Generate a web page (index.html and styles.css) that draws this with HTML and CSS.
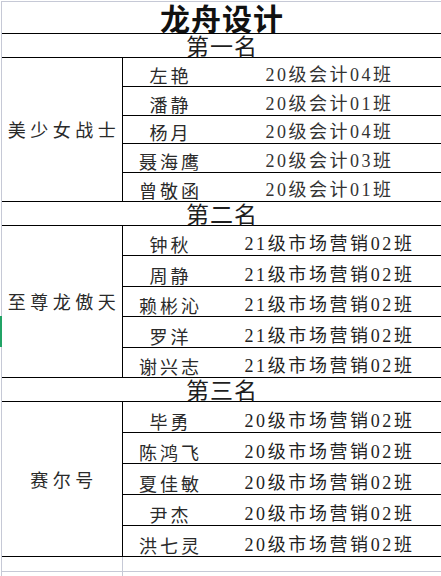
FILE: index.html
```html
<!DOCTYPE html>
<html lang="zh-CN">
<head>
<meta charset="utf-8">
<title>龙舟设计</title>
<link rel="stylesheet" href="styles.css">
</head>
<body>
<div class="page">
  <div class="sheet">
    <div class="title">龙舟设计</div>
    <div class="rank">第一名</div>
    <div class="group g1">
      <div class="team">美少女战士</div>
      <div class="members">
        <div class="row"><span class="name">左艳</span><span class="cls">20级会计04班</span></div>
        <div class="row"><span class="name">潘静</span><span class="cls">20级会计01班</span></div>
        <div class="row"><span class="name">杨月</span><span class="cls">20级会计04班</span></div>
        <div class="row"><span class="name">聂海鹰</span><span class="cls">20级会计03班</span></div>
        <div class="row"><span class="name">曾敬函</span><span class="cls">20级会计01班</span></div>
      </div>
    </div>
    <div class="rank">第二名</div>
    <div class="group g2">
      <div class="team">至尊龙傲天</div>
      <div class="members">
        <div class="row"><span class="name">钟秋</span><span class="cls">21级市场营销02班</span></div>
        <div class="row"><span class="name">周静</span><span class="cls">21级市场营销02班</span></div>
        <div class="row"><span class="name">赖彬沁</span><span class="cls">21级市场营销02班</span></div>
        <div class="row"><span class="name">罗洋</span><span class="cls">21级市场营销02班</span></div>
        <div class="row"><span class="name">谢兴志</span><span class="cls">21级市场营销02班</span></div>
      </div>
    </div>
    <div class="rank">第三名</div>
    <div class="group g3">
      <div class="team">赛尔号</div>
      <div class="members">
        <div class="row"><span class="name">毕勇</span><span class="cls">20级市场营销02班</span></div>
        <div class="row"><span class="name">陈鸿飞</span><span class="cls">20级市场营销02班</span></div>
        <div class="row"><span class="name">夏佳敏</span><span class="cls">20级市场营销02班</span></div>
        <div class="row"><span class="name">尹杰</span><span class="cls">20级市场营销02班</span></div>
        <div class="row"><span class="name">洪七灵</span><span class="cls">20级市场营销02班</span></div>
      </div>
    </div>
    <div class="tail">
      <div class="tcell first"></div><div class="tcell"></div>
      <div class="tcell first last"></div><div class="tcell last"></div>
    </div>
  </div>
  <div class="marker"></div>
</div>
</body>
</html>
```

FILE: styles.css
```css
html, body {
  margin: 0;
  padding: 0;
  overflow: hidden;
  background: #ffffff;
}

.page {
  position: relative;
  width: 441px;
  height: 576px;
  overflow: hidden;
}

.sheet {
  width: 440px;
  margin-left: 1px;
  margin-top: 1px;
  border-left: 1px solid #c6c9d6;
  border-top: 1px solid #c6c9d6;
  color: #1e1e1e;
  font-family: "Noto Sans CJK SC", sans-serif;
}

.title {
  height: 31px;
  line-height: 31px;
  font-size: 30px;
  font-weight: bold;
  text-align: center;
  letter-spacing: 1px;
  color: #111;
  border-bottom: 1px solid #000;
}

.rank {
  height: 23px;
  line-height: 23px;
  font-size: 23px;
  text-align: center;
  letter-spacing: 1px;
  border-bottom: 1px solid #000;
}

.group {
  display: grid;
  grid-template-columns: 121px 1fr;
  border-bottom: 1px solid #000;
}

.team {
  border-right: 1px solid #000;
  display: flex;
  align-items: center;
  justify-content: center;
  font-size: 18px;
  letter-spacing: 4.5px;
  padding-left: 4px;
  color: #2a2a2a;
}

.members {
  display: flex;
  flex-direction: column;
}

.row {
  display: grid;
  grid-template-columns: 92px 1fr;
  align-items: end;
  font-size: 18px;
  line-height: 22px;
}

.row + .row {
  border-top: 1px solid #000;
}

.g1 .row { height: 27.8px; }
.g2 .row { height: 29.4px; }
.g3 .row { height: 30px; }

.name {
  text-align: center;
  letter-spacing: 3px;
  padding-left: 3px;
  color: #2a2a2a;
}

.cls {
  text-align: center;
  font-family: "Liberation Serif", "Noto Sans CJK SC", serif;
  letter-spacing: 2.6px;
  padding-left: 2px;
  color: #222;
}

.g1 .cls {
  letter-spacing: 2.5px;
  color: #333;
}

.tail {
  display: grid;
  grid-template-columns: 121px 1fr;
}

.tcell {
  height: 14px;
  border-bottom: 1px solid #c6c9d6;
}

.tcell.first {
  border-right: 1px solid #c6c9d6;
}

.tcell.last {
  height: 10px;
  border-bottom: none;
}

.marker {
  position: absolute;
  left: 0;
  top: 316px;
  width: 2px;
  height: 31px;
  background: #21a366;
}
```
